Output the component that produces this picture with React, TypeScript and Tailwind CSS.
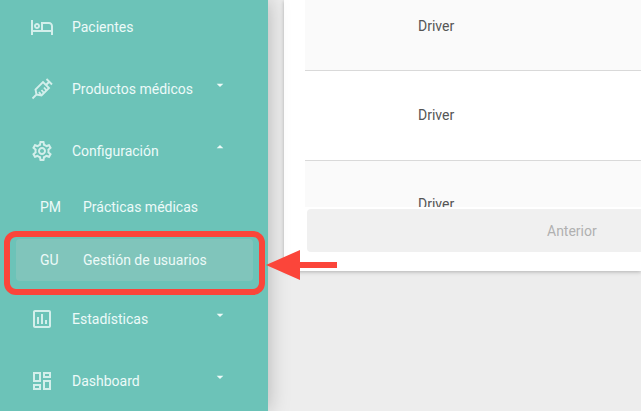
import type { ReactNode } from "react";
import {
  MdArrowDropDown,
  MdArrowDropUp,
  MdOutlineAssessment,
  MdOutlineDashboard,
  MdOutlineHotel,
  MdOutlineSettings,
} from "react-icons/md";

function SyringeIcon() {
  return (
    <svg viewBox="0 0 24 24" className="w-6 h-6" fill="none" stroke="currentColor" strokeWidth="1.9" aria-hidden="true">
      <path d="M2.5 21.5L6.5 17.5L5.5 12.5L13 5L19 11L11.5 18.5L6.5 17.5" />
      <path d="M16 8L19.5 4.5M16.5 2L22 7.5M11.5 18.5L9 15M14 16L11.5 13M16.5 13.5L14 10.5" />
    </svg>
  );
}

type MenuItemProps = {
  icon: ReactNode;
  label: string;
  caret?: "up" | "down";
};

function MenuItem({ icon, label, caret }: MenuItemProps) {
  const content = (
    <>
      <span className="w-6 shrink-0 opacity-80">{icon}</span>
      <span className="ml-[18px] flex-1 text-left">{label}</span>
      {caret === "down" && <MdArrowDropDown className="w-4 h-4 mb-2" />}
      {caret === "up" && <MdArrowDropUp className="w-4 h-4 mb-2" />}
    </>
  );
  const className = "flex items-center w-full h-[50px] pl-[30px] pr-10";

  return (
    <li>
      {caret ? (
        <button type="button" aria-expanded={caret === "up"} className={className}>
          {content}
        </button>
      ) : (
        <a href="#" className={className}>
          {content}
        </a>
      )}
    </li>
  );
}

function SubMenuItem({ initials, label, active }: { initials: string; label: string; active?: boolean }) {
  return (
    <li className="pl-4 pr-[15px]">
      <a
        href="#"
        className={`flex items-center h-[42px] rounded-sm ${active ? "bg-[#80c5bb]" : ""}`}
      >
        <span className="w-[67px] pl-6">{initials}</span>
        <span>{label}</span>
      </a>
    </li>
  );
}

function Sidebar() {
  return (
    <aside className="relative z-10 w-[268px] shrink-0 bg-[#6cc3b8] text-[#edfaf8] shadow-[0_0_20px_rgba(0,0,0,0.25)]">
      <ul className="flex flex-col gap-3 pt-0.5">
        <MenuItem icon={<MdOutlineHotel className="w-6 h-6" />} label="Pacientes" />
        <MenuItem icon={<SyringeIcon />} label="Productos médicos" caret="down" />
        <MenuItem icon={<MdOutlineSettings className="w-6 h-6" />} label="Configuración" caret="up" />
      </ul>

      <ul className="flex flex-col gap-[11px] pt-2.5 pb-[13px]">
        <SubMenuItem initials="PM" label="Prácticas médicas" />
        <SubMenuItem initials="GU" label="Gestión de usuarios" active />
      </ul>

      <ul className="flex flex-col gap-3">
        <MenuItem icon={<MdOutlineAssessment className="w-6 h-6" />} label="Estadísticas" caret="down" />
        <MenuItem icon={<MdOutlineDashboard className="w-6 h-6" />} label="Dashboard" caret="down" />
      </ul>

      {/* Highlight and arrow */}
      <div className="absolute left-1 top-[231px] w-[261px] h-16 rounded-xl border-[6px] border-[#fb453a] pointer-events-none" />
      <svg
        viewBox="0 0 71 30"
        className="absolute left-[266px] top-[250px] w-[71px] h-[30px] pointer-events-none"
        fill="#fb453a"
        aria-hidden="true"
      >
        <path d="M0 15L34 0V12H71V18H34V30Z" />
      </svg>
    </aside>
  );
}

function UsersCard() {
  return (
    <section className="bg-white pl-[21px] pb-[19px] shadow-[0_1px_4px_rgba(0,0,0,0.25)]">
      <div className="h-[207px] overflow-hidden">
        <table className="w-full text-[#555]">
          <tbody>
            <tr className="bg-[#fafafa] border-b border-[#d9d9d9]">
              <td className="h-[70px] pt-4 pl-[113px] align-top">Driver</td>
            </tr>
            <tr className="border-b border-[#d9d9d9]">
              <td className="h-[90px] pl-[113px]">Driver</td>
            </tr>
            <tr className="bg-[#fafafa]">
              <td className="h-[90px] pt-[33px] pl-[113px] align-top">Driver</td>
            </tr>
          </tbody>
        </table>
      </div>
      <div className="flex pt-0.5 pl-0.5">
        <button
          type="button"
          disabled
          className="flex-1 h-[43px] pl-60 rounded-l-sm bg-[#f0f0f0] text-left text-[#b0b0b0]"
        >
          Anterior
        </button>
      </div>
    </section>
  );
}

export default function App() {
  return (
    <div className="flex min-h-screen overflow-hidden bg-[#ededed] font-['Roboto',sans-serif] text-sm">
      <Sidebar />
      <main className="flex-1 min-w-0 pl-4">
        <UsersCard />
      </main>
    </div>
  );
}
